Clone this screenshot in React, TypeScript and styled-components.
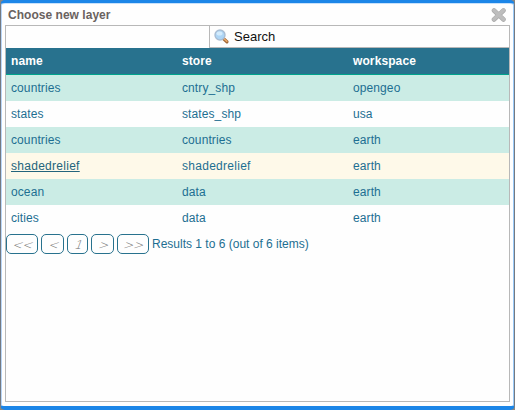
import React from 'react';
import styled, { createGlobalStyle } from 'styled-components';

const GlobalStyle = createGlobalStyle`
  * { box-sizing: border-box; }
  html, body { margin: 0; padding: 0; overflow: hidden; background: #8b8780; }
  body { font: 12px "Liberation Sans", Arial, sans-serif; color: #1d6f92; }
`;

const Dialog = styled.div`
  width: 515px;
  height: 410px;
  display: flex;
  flex-direction: column;
  padding: 0 4px 4px;
  background: #fefefe;
  border-style: solid;
  border-width: 3px 1px 4px;
  border-color: #1c86e8 #747a82 #1c86e8 #747a82;
  border-radius: 5px;
  box-shadow: inset 1px 0 #b9d6f8, inset -1px 0 #9bcaf7, inset 0 1px #c7e1fb;
`;

const TitleBar = styled.header`
  height: 22px;
  flex: none;
  display: flex;
  align-items: center;
  justify-content: space-between;
  padding: 2px 3px 0;
`;

const Title = styled.h1`
  margin: 0;
  font-size: 12px;
  line-height: 16px;
  letter-spacing: 0.03px;
  color: #6a625e;
`;

const CloseButton = styled.button`
  width: 16px;
  height: 16px;
  padding: 0;
  border: 0;
  background: none;
  svg { display: block; }
`;

const Content = styled.main`
  flex: 1;
  border: 1px solid #b8b8b8;
`;

const SearchRow = styled.div`
  height: 22px;
  display: flex;
  justify-content: flex-end;
`;

const SearchField = styled.label`
  width: 300px;
  height: 22px;
  display: flex;
  align-items: center;
  gap: 5px;
  padding-left: 4px;
  border: solid #b8b8b8;
  border-width: 0 0 1px 1px;
  color: #111;
  font-size: 13px;
`;

const Row = styled.div<{ $tone: string }>`
  height: 26px;
  display: grid;
  grid-template-columns: 171px 171px 1fr;
  align-items: center;
  padding-left: 5px;
  background: ${(p) => p.$tone};
`;

const HeaderRow = styled(Row)`
  height: 27px;
  border-bottom: 1px solid #00a48d;
  color: #fff;
  font-weight: bold;
  letter-spacing: 0.1px;
`;

const Cell = styled.span<{ $active?: boolean; $wide?: boolean }>`
  justify-self: start;
  color: ${(p) => (p.$active ? '#24647c' : 'inherit')};
  letter-spacing: ${(p) => (p.$wide ? 0.28 : 0.1)}px;
  text-decoration: ${(p) => (p.$active ? 'underline' : 'none')};
`;

const Pager = styled.nav`
  display: flex;
  align-items: center;
  gap: 3px;
  padding-top: 3px;
`;

const PageButton = styled.button<{ $width: number }>`
  width: ${(p) => p.$width}px;
  height: 20px;
  padding: 2px 0 0 3px;
  border: 1px solid #28728e;
  border-radius: 5px;
  background: #fefefe;
  color: #707070;
  font: 12px/17px "DejaVu Sans", sans-serif;
  font-weight: 200;
`;

const PageLabel = styled.span`
  display: inline-block;
  transform: skewX(-20deg);
`;

const CloseIcon = () => (
  <svg width="16" height="16" viewBox="0 0 16 16">
    <path d="M3 3.5 12.5 12.5M12.5 3.5 3 12.5" stroke="#aaa" strokeWidth="4.6" strokeLinecap="round" />
    <path d="M3 3.2 12.5 12.2M12.5 3.2 3 12.2" stroke="#bdbdbd" strokeWidth="3.5" strokeLinecap="round" />
  </svg>
);

const SearchIcon = () => (
  <svg width="15" height="15" viewBox="0 0 15 15">
    <path d="m9.6 9.8 3.3 3" stroke="#a36836" strokeWidth="3.2" strokeLinecap="round" />
    <path d="m10 9.8 2.8 2.5" stroke="#efab68" strokeWidth="1.5" strokeLinecap="round" />
    <circle cx="6" cy="6" r="5" fill="#add5f5" stroke="#a9bdd3" strokeWidth="1.4" />
    <ellipse cx="5.5" cy="4.5" rx="3" ry="2" fill="#d3ebfc" />
  </svg>
);

const layers = [
  ['countries', 'cntry_shp', 'opengeo'],
  ['states', 'states_shp', 'usa'],
  ['countries', 'countries', 'earth'],
  ['shadedrelief', 'shadedrelief', 'earth'],
  ['ocean', 'data', 'earth'],
  ['cities', 'data', 'earth'],
];

const pages: [string, number][] = [['<<', 32], ['<', 23], ['1', 21], ['>', 23], ['>>', 32]];
const activeRow = 3;

const rowTone = (index: number) => {
  if (index === activeRow) return '#fef9e9';
  return index % 2 ? '#fefefe' : '#cbece5';
};

export default function App() {
  return (
    <>
      <GlobalStyle />
      <Dialog role="dialog">
        <TitleBar>
          <Title>Choose new layer</Title>
          <CloseButton aria-label="Close"><CloseIcon /></CloseButton>
        </TitleBar>
        <Content>
          <SearchRow>
            <SearchField><SearchIcon />Search</SearchField>
          </SearchRow>
          <HeaderRow $tone="#28728e">
            <span>name</span><span>store</span><span>workspace</span>
          </HeaderRow>
          {layers.map((layer, row) => (
            <Row key={row} $tone={rowTone(row)}>
              {layer.map((value, column) => (
                <Cell key={column} $active={row === activeRow && column === 0} $wide={row === activeRow && column < 2}>
                  {value}
                </Cell>
              ))}
            </Row>
          ))}
          <Pager>
            {pages.map(([label, width]) => (
              <PageButton key={label} $width={width}><PageLabel>{label}</PageLabel></PageButton>
            ))}
            <span>Results 1 to 6 (out of 6 items)</span>
          </Pager>
        </Content>
      </Dialog>
    </>
  );
}
